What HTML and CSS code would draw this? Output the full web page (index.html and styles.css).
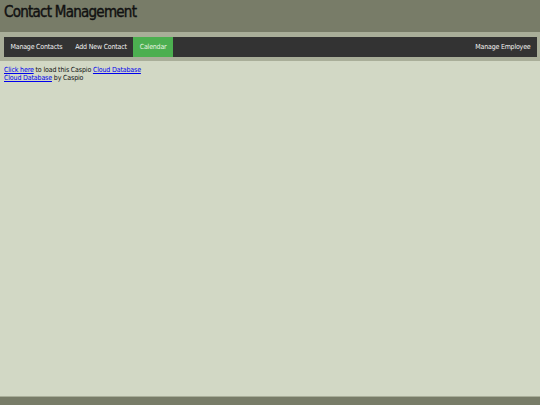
FILE: index.html
```html
<!DOCTYPE html>
<html>
<head>
<meta charset="utf-8">
<title>Contact Management</title>
<link rel="stylesheet" href="styles.css">
</head>
<body>
<header class="masthead">
  <h1 class="site-title">Contact Management</h1>
</header>
<div class="nav-band">
  <nav class="nav">
    <a class="nav-item" href="#">Manage Contacts</a>
    <a class="nav-item" href="#">Add New Contact</a>
    <a class="nav-item nav-item--active" href="#">Calendar</a>
    <a class="nav-item nav-item--right" href="#">Manage Employee</a>
  </nav>
</div>
<main class="content">
  <p class="notice"><a href="#">Click here</a> to load this Caspio <a href="#">Cloud Database</a><br><a href="#">Cloud Database</a> by Caspio</p>
</main>
<footer class="footer"></footer>
</body>
</html>
```

FILE: styles.css
```css
html, body {
  margin: 0;
  padding: 0;
  height: 100%;
}
body {
  display: flex;
  flex-direction: column;
  min-height: 100vh;
  background: #d2d8c5;
  font-family: "DejaVu Sans Condensed", "DejaVu Sans", sans-serif;
  font-stretch: condensed;
}
.masthead {
  background: #787c68;
  height: 32px;
  box-sizing: border-box;
  padding: 4px 4px 0;
}
.site-title {
  margin: 0;
  font-size: 15px;
  font-weight: normal;
  letter-spacing: -0.75px;
  color: #111;
  line-height: 17px;
  -webkit-text-stroke: 0.4px #111;
}
.nav-band {
  background: #a9ae99;
  padding: 5px 3px 4px 4px;
}
.nav {
  display: flex;
  height: 20px;
  background: #333333;
}
.nav-item {
  display: block;
  padding: 0 6.5px;
  line-height: 20px;
  font-size: 7px;
  letter-spacing: -0.2px;
  color: #f2f2f2;
  text-decoration: none;
}
.nav-item--active {
  background: #4caf50;
  color: #e8f5e0;
}
.nav-item--right {
  margin-left: auto;
}
.content {
  flex: 1;
  padding: 5px 4px 4px;
}
.notice {
  margin: 0;
  font-size: 7px;
  letter-spacing: -0.15px;
  line-height: 8px;
  color: #111;
}
.notice a {
  color: #0000ee;
}
.footer {
  height: 8px;
  background: #787c68;
  border-top: 1px solid #a9ae99;
}
```
